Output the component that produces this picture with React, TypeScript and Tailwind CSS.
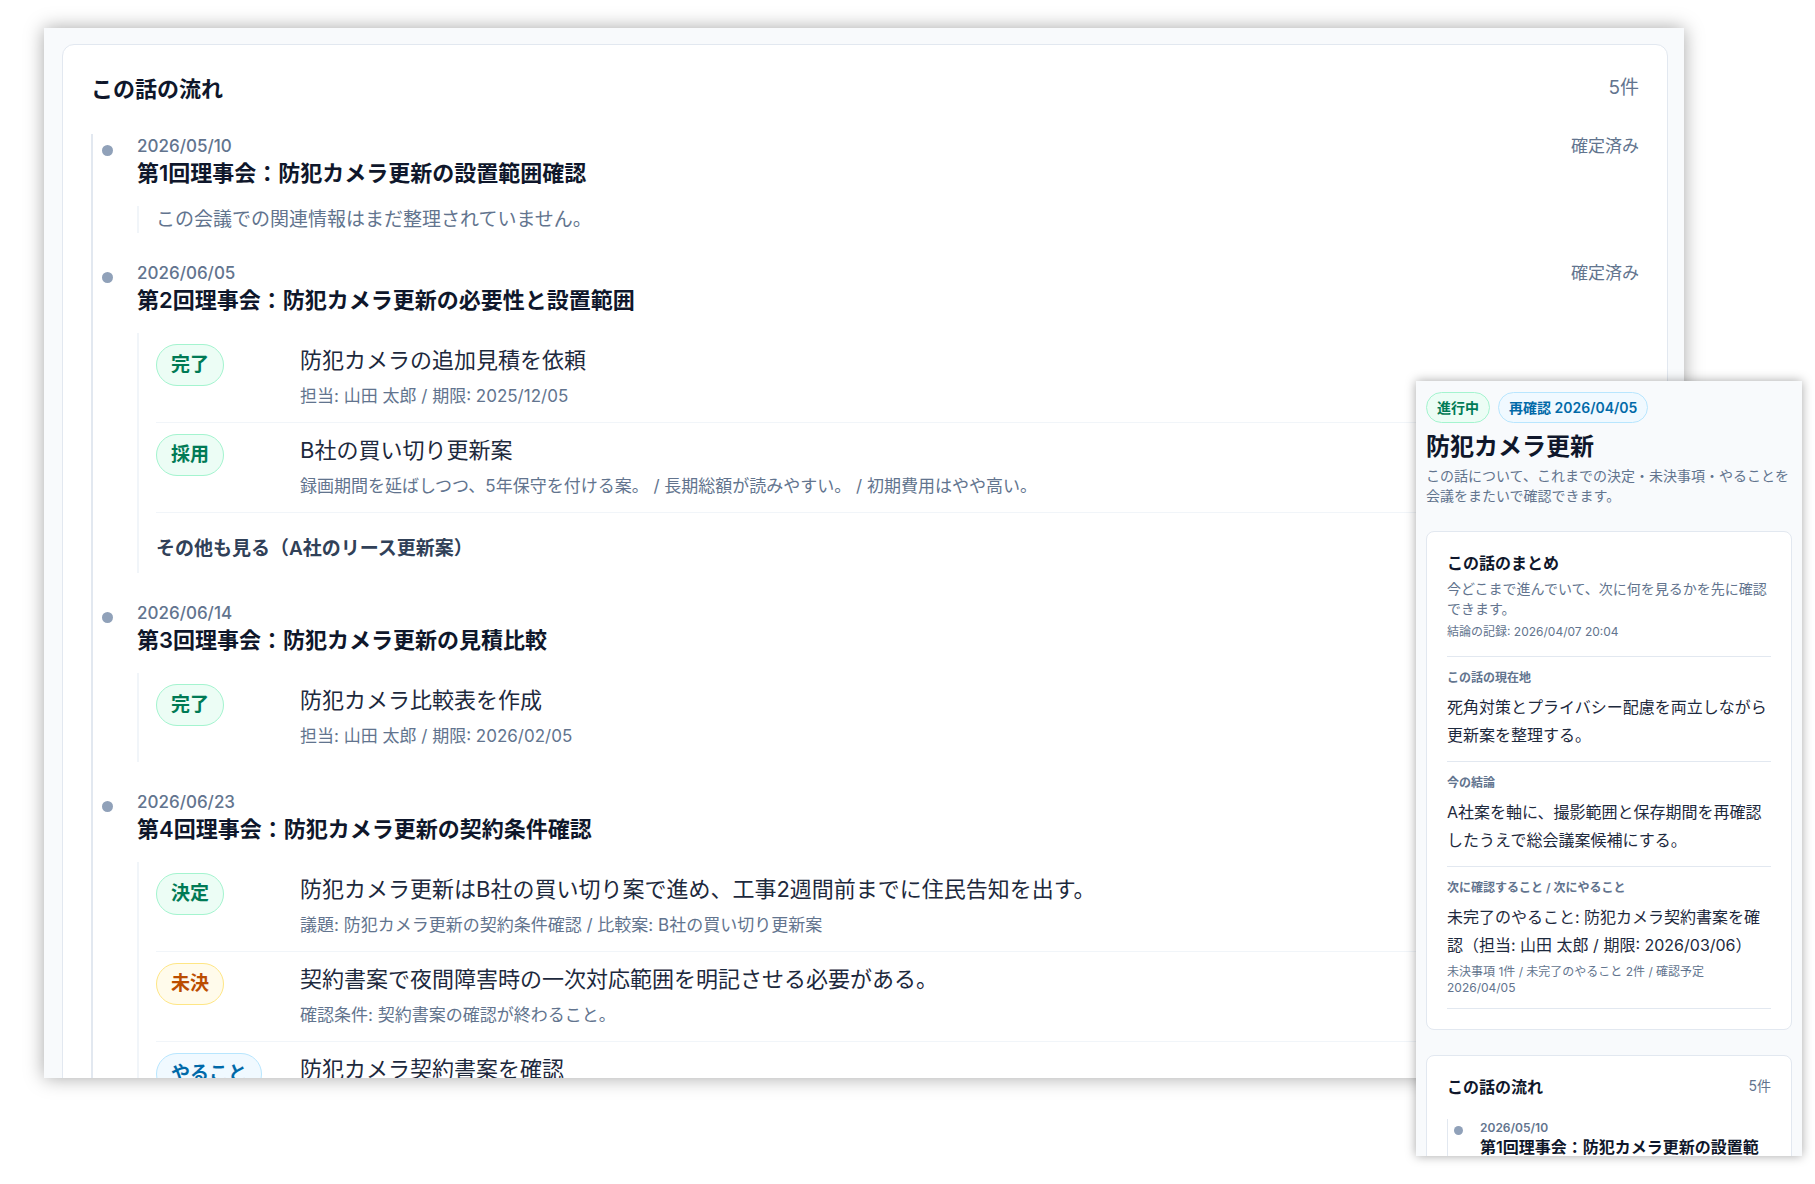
import clsx from "clsx";

type Tone = "green" | "amber" | "sky";

type Entry = {
  label: string;
  tone: Tone;
  title: string;
  meta?: string;
};

type Meeting = {
  date: string;
  title: string;
  status?: string;
  entries: Entry[];
  more?: string;
};

const toneClasses: Record<Tone, string> = {
  green: "border-emerald-200 bg-emerald-50 text-emerald-700",
  amber: "border-amber-200 bg-amber-50 text-amber-700",
  sky: "border-sky-200 bg-sky-50 text-sky-700",
};

const meetings: Meeting[] = [
  {
    date: "2026/05/10",
    title: "第1回理事会：防犯カメラ更新の設置範囲確認",
    status: "確定済み",
    entries: [],
  },
  {
    date: "2026/06/05",
    title: "第2回理事会：防犯カメラ更新の必要性と設置範囲",
    status: "確定済み",
    entries: [
      {
        label: "完了",
        tone: "green",
        title: "防犯カメラの追加見積を依頼",
        meta: "担当: 山田 太郎 / 期限: 2025/12/05",
      },
      {
        label: "採用",
        tone: "green",
        title: "B社の買い切り更新案",
        meta: "録画期間を延ばしつつ、5年保守を付ける案。 / 長期総額が読みやすい。 / 初期費用はやや高い。",
      },
    ],
    more: "その他も見る（A社のリース更新案）",
  },
  {
    date: "2026/06/14",
    title: "第3回理事会：防犯カメラ更新の見積比較",
    entries: [
      {
        label: "完了",
        tone: "green",
        title: "防犯カメラ比較表を作成",
        meta: "担当: 山田 太郎 / 期限: 2026/02/05",
      },
    ],
  },
  {
    date: "2026/06/23",
    title: "第4回理事会：防犯カメラ更新の契約条件確認",
    entries: [
      {
        label: "決定",
        tone: "green",
        title: "防犯カメラ更新はB社の買い切り案で進め、工事2週間前までに住民告知を出す。",
        meta: "議題: 防犯カメラ更新の契約条件確認 / 比較案: B社の買い切り更新案",
      },
      {
        label: "未決",
        tone: "amber",
        title: "契約書案で夜間障害時の一次対応範囲を明記させる必要がある。",
        meta: "確認条件: 契約書案の確認が終わること。",
      },
      {
        label: "やること",
        tone: "sky",
        title: "防犯カメラ契約書案を確認",
      },
    ],
  },
];

const summary = [
  {
    label: "この話の現在地",
    text: "死角対策とプライバシー配慮を両立しながら更新案を整理する。",
  },
  {
    label: "今の結論",
    text: "A社案を軸に、撮影範囲と保存期間を再確認したうえで総会議案候補にする。",
  },
  {
    label: "次に確認すること / 次にやること",
    text: "未完了のやること: 防犯カメラ契約書案を確認（担当: 山田 太郎 / 期限: 2026/03/06）",
    note: "未決事項 1件 / 未完了のやること 2件 / 確認予定 2026/04/05",
  },
];

function EntryRow({ entry }: { entry: Entry }) {
  return (
    <li className="grid grid-cols-[128px_1fr] gap-4 border-b border-slate-100 pt-[11px] pb-[13px] last:border-b-0">
      <div>
        <span
          className={clsx(
            "inline-flex h-[42px] items-center rounded-full border px-[14px] text-[19px] font-semibold",
            toneClasses[entry.tone]
          )}
        >
          {entry.label}
        </span>
      </div>
      <div>
        <p className="text-[22px] leading-8 text-slate-800">{entry.title}</p>
        {entry.meta && (
          <p className="mt-2 text-[17px] leading-[25px] text-slate-500">
            {entry.meta}
          </p>
        )}
      </div>
    </li>
  );
}

function MeetingItem({ meeting }: { meeting: Meeting }) {
  return (
    <li className="flex gap-6 pb-7">
      <span className="mt-[11px] size-[11px] shrink-0 rounded-full bg-slate-400" />
      <div className="min-w-0 flex-1">
        <div className="flex justify-between text-[17px] leading-6 text-slate-500">
          <time className="font-medium">{meeting.date}</time>
          {meeting.status && <span>{meeting.status}</span>}
        </div>
        <h3 className="text-[22px] leading-[31px] font-semibold text-slate-900">
          {meeting.title}
        </h3>
        <div className="mt-[17px] border-l-2 border-slate-100 pl-[17px]">
          {meeting.entries.length === 0 ? (
            <p className="text-[19px] leading-[27px] text-slate-500">
              この会議での関連情報はまだ整理されていません。
            </p>
          ) : (
            <ul className={clsx(meeting.more && "border-b border-slate-100")}>
              {meeting.entries.map((entry) => (
                <EntryRow key={entry.title} entry={entry} />
              ))}
            </ul>
          )}
          {meeting.more && (
            <button
              type="button"
              className="block pt-[22px] pb-[10px] text-left text-[19px] leading-7 font-semibold text-slate-700"
            >
              {meeting.more}
            </button>
          )}
        </div>
      </div>
    </li>
  );
}

function DesktopView() {
  return (
    <section className="h-full overflow-hidden bg-slate-50 pt-4 pr-4 pl-[18px] shadow-[0_0_18px_rgba(0,0,0,0.35)]">
      <div className="rounded-xl border border-slate-200 bg-white p-7">
        <div className="flex items-start justify-between">
          <h2 className="text-[22px] leading-8 font-semibold text-slate-900">
            この話の流れ
          </h2>
          <span className="text-[19px] leading-[30px] text-slate-500">5件</span>
        </div>
        <ol className="mt-[29px] border-l-2 border-slate-200 pl-[9px]">
          {meetings.map((meeting) => (
            <MeetingItem key={meeting.date} meeting={meeting} />
          ))}
        </ol>
      </div>
    </section>
  );
}

function MobileView() {
  return (
    <aside className="absolute top-[381px] right-[13px] bottom-7 w-[386px] overflow-hidden bg-slate-50 px-[10px] pt-[11px] shadow-[0_0_10px_rgba(0,0,0,0.35)]">
      <div className="flex gap-2 text-sm font-semibold">
        <span className="flex h-[31px] items-center rounded-full border border-emerald-200 bg-emerald-50 px-[10px] text-emerald-700">
          進行中
        </span>
        <span className="flex h-[31px] items-center rounded-full border border-sky-200 bg-sky-50 px-[10px] text-sky-700">
          再確認 2026/04/05
        </span>
      </div>
      <h1 className="mt-[9px] text-2xl leading-[30px] font-semibold text-slate-900">
        防犯カメラ更新
      </h1>
      <p className="mt-1 text-sm text-slate-500">
        この話について、これまでの決定・未決事項・やることを会議をまたいで確認できます。
      </p>

      <div className="mt-[25px] rounded-lg border border-slate-200 bg-white p-5">
        <h2 className="text-base leading-[23px] font-semibold text-slate-900">
          この話のまとめ
        </h2>
        <p className="mt-1 text-sm text-slate-500">
          今どこまで進んでいて、次に何を見るかを先に確認できます。
        </p>
        <p className="mt-1 text-xs leading-[18px] text-slate-500">
          結論の記録: 2026/04/07 20:04
        </p>
        <div className="mt-[15px] border-b border-slate-200">
          {summary.map((item) => (
            <div
              key={item.label}
              className="border-t border-slate-200 pt-3 pb-3"
            >
              <h3 className="text-xs leading-[18px] font-semibold text-slate-500">
                {item.label}
              </h3>
              <p className="mt-[6px] text-base leading-7 text-slate-800">
                {item.text}
              </p>
              {item.note && (
                <p className="mt-[5px] text-xs text-slate-500">{item.note}</p>
              )}
            </div>
          ))}
        </div>
      </div>

      <div className="mt-[25px] rounded-lg border border-slate-200 bg-white p-5">
        <div className="flex items-start justify-between">
          <h2 className="text-base leading-[23px] font-semibold text-slate-900">
            この話の流れ
          </h2>
          <span className="text-sm text-slate-500">5件</span>
        </div>
        <ol className="mt-5 border-l border-slate-200 pl-[6px]">
          <li className="flex gap-[17px] pb-5">
            <span className="mt-[7px] size-[9px] shrink-0 rounded-full bg-slate-400" />
            <div>
              <time className="block text-xs leading-[17px] font-semibold text-slate-500">
                {meetings[0].date}
              </time>
              <h3 className="text-base leading-[22px] font-semibold text-slate-900">
                {meetings[0].title}
              </h3>
            </div>
          </li>
        </ol>
      </div>
    </aside>
  );
}

export default function App() {
  return (
    <main
      lang="ja"
      className="relative h-screen overflow-hidden bg-white pt-7 pr-[131px] pb-[106px] pl-11 font-['Inter','Noto_Sans_CJK_JP',sans-serif]"
    >
      <DesktopView />
      <MobileView />
    </main>
  );
}
